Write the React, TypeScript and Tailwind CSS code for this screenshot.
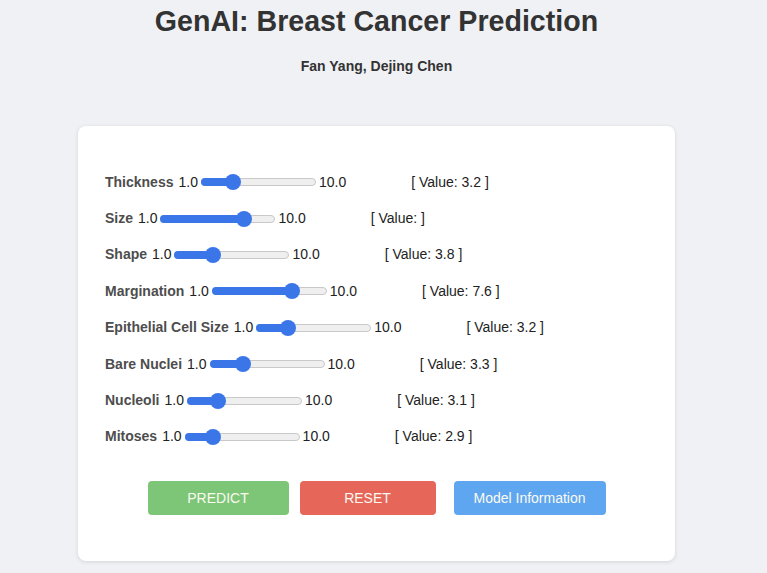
import React from 'react';

type Feature = {
  name: string;
  value: number;
  shown: string;
};

const features: Feature[] = [
  { name: 'Thickness', value: 3.2, shown: '3.2 ' },
  { name: 'Size', value: 7.9, shown: '' },
  { name: 'Shape', value: 3.8, shown: '3.8 ' },
  { name: 'Margination', value: 7.6, shown: '7.6 ' },
  { name: 'Epithelial Cell Size', value: 3.2, shown: '3.2 ' },
  { name: 'Bare Nuclei', value: 3.3, shown: '3.3 ' },
  { name: 'Nucleoli', value: 3.1, shown: '3.1 ' },
  { name: 'Mitoses', value: 2.9, shown: '2.9 ' },
];

const TRACK = 115;
const THUMB = 16;

const Slider = ({ value }: { value: number }) => {
  const frac = (value - 1) / 9;
  const left = frac * (TRACK - THUMB);
  return (
    <div className="relative ml-[3px] mr-[2px] h-4 w-[115px]">
      <div className="absolute left-0 right-0 top-[4px] h-[8px] rounded-full border border-[#c9c9c9] bg-[#efefef]" />
      <div
        className="absolute left-0 top-[4px] h-[8px] rounded-full bg-[#3a76e8]"
        style={{ width: left + THUMB / 2 }}
      />
      <div
        className="absolute top-0 h-4 w-4 rounded-full bg-[#3a76e8]"
        style={{ left }}
      />
    </div>
  );
};

const Row = ({ f }: { f: Feature }) => (
  <div className="flex h-[36.4px] items-center text-[14px] text-[#222]">
    <span className="font-bold text-[#4d4d4d]">{f.name}</span>
    <span className="ml-[5px]">1.0</span>
    <Slider value={f.value} />
    <span className="ml-[1px]">10.0</span>
    <span className="ml-[65px]">[ Value: {f.shown}]</span>
  </div>
);

const App = () => {
  return (
    <div className="min-h-[573px] w-full bg-[#f0f1f5] font-['Liberation_Sans',Arial,sans-serif]">
      <div className="flex w-[753px] flex-col items-center pt-[4px]">
        <h1 className="text-[28.6px] font-bold leading-[34px] text-[#333]">
          GenAI: Breast Cancer Prediction
        </h1>
        <div className="mt-[20px] text-[14px] font-bold leading-[16px] text-[#333]">
          Fan Yang, Dejing Chen
        </div>
        <div className="mt-[52px] w-[597px] rounded-[8px] bg-white pb-[46px] pl-[27px] pt-[38px] shadow-[0_1px_4px_rgba(0,0,0,0.12)]">
          {features.map((f) => (
            <Row key={f.name} f={f} />
          ))}
          <div className="mt-[26px] flex justify-center pr-[27px] text-[14px] text-[#fafaf0]">
            <button className="h-[34px] w-[141px] rounded-[4px] bg-[#7dc677]">PREDICT</button>
            <button className="ml-[11px] h-[34px] w-[136px] rounded-[4px] bg-[#e6665a]">RESET</button>
            <button className="ml-[18px] h-[34px] w-[152px] rounded-[4px] bg-[#5fa6f1]">
              Model Information
            </button>
          </div>
        </div>
      </div>
    </div>
  );
};

export default App;
